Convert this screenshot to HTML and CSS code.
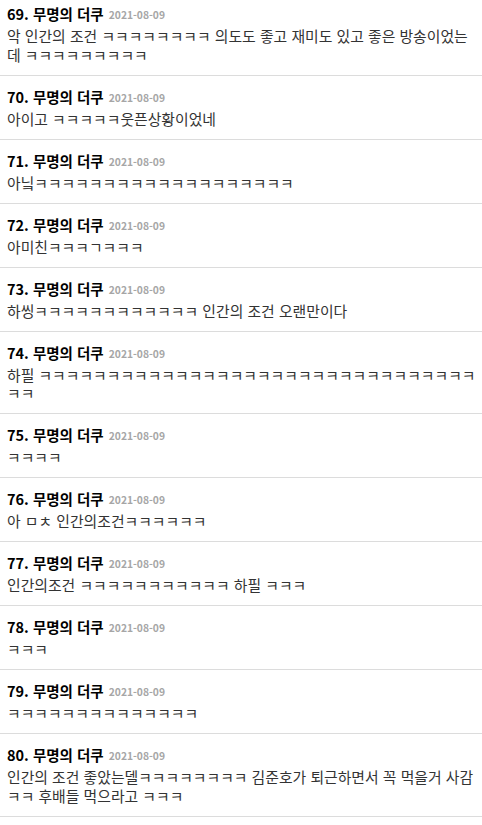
FILE: index.html
```html
<!DOCTYPE html>
<html lang="ko">
<head>
<meta charset="UTF-8" />
<meta name="viewport" content="width=device-width, initial-scale=1.0"/>
<title>댓글</title>
<link rel="stylesheet" href="styles.css">
</head>
<body>

<ul class="comment-list">
<li class="comment">
<div class="comment-head"><span class="num">69.</span> 무명의 더쿠 <span class="date">2021-08-09</span></div>
<p class="comment-text">악 인간의 조건 ㅋㅋㅋㅋㅋㅋㅋㅋ 의도도 좋고 재미도 있고 좋은 방송이었는데 ㅋㅋㅋㅋㅋㅋㅋㅋㅋ</p>
</li>
<li class="comment">
<div class="comment-head"><span class="num">70.</span> 무명의 더쿠 <span class="date">2021-08-09</span></div>
<p class="comment-text">아이고 ㅋㅋㅋㅋㅋ웃픈상황이었네</p>
</li>
<li class="comment">
<div class="comment-head"><span class="num">71.</span> 무명의 더쿠 <span class="date">2021-08-09</span></div>
<p class="comment-text">아닠ㅋㅋㅋㅋㅋㅋㅋㅋㅋㅋㅋㅋㅋㅋㅋㅋㅋㅋㅋ</p>
</li>
<li class="comment">
<div class="comment-head"><span class="num">72.</span> 무명의 더쿠 <span class="date">2021-08-09</span></div>
<p class="comment-text">아미친ㅋㅋㅋㄱㅋㅋㅋ</p>
</li>
<li class="comment">
<div class="comment-head"><span class="num">73.</span> 무명의 더쿠 <span class="date">2021-08-09</span></div>
<p class="comment-text">하씽ㅋㅋㅋㅋㅋㅋㅋㅋㅋㅋㅋㅋ 인간의 조건 오랜만이다</p>
</li>
<li class="comment">
<div class="comment-head"><span class="num">74.</span> 무명의 더쿠 <span class="date">2021-08-09</span></div>
<p class="comment-text">하필 ㅋㅋㅋㅋㅋㅋㅋㅋㅋㅋㅋㅋㅋㅋㅋㅋㅋㅋㅋㅋㅋㅋㅋㅋㅋㅋㅋㅋㅋㅋㅋㅋㅋㅋ</p>
</li>
<li class="comment">
<div class="comment-head"><span class="num">75.</span> 무명의 더쿠 <span class="date">2021-08-09</span></div>
<p class="comment-text">ㅋㅋㅋㅋ</p>
</li>
<li class="comment">
<div class="comment-head"><span class="num">76.</span> 무명의 더쿠 <span class="date">2021-08-09</span></div>
<p class="comment-text">아 ㅁㅊ 인간의조건ㅋㅋㅋㅋㅋㅋ</p>
</li>
<li class="comment">
<div class="comment-head"><span class="num">77.</span> 무명의 더쿠 <span class="date">2021-08-09</span></div>
<p class="comment-text">인간의조건 ㅋㅋㅋㅋㅋㅋㅋㅋㅋㅋㅋ 하필 ㅋㅋㅋ</p>
</li>
<li class="comment">
<div class="comment-head"><span class="num">78.</span> 무명의 더쿠 <span class="date">2021-08-09</span></div>
<p class="comment-text">ㅋㅋㅋ</p>
</li>
<li class="comment">
<div class="comment-head"><span class="num">79.</span> 무명의 더쿠 <span class="date">2021-08-09</span></div>
<p class="comment-text">ㅋㅋㅋㅋㅋㅋㅋㅋㅋㅋㅋㅋㅋㅋ</p>
</li>
<li class="comment">
<div class="comment-head"><span class="num">80.</span> 무명의 더쿠 <span class="date">2021-08-09</span></div>
<p class="comment-text">인간의 조건 좋았는델ㅋㅋㅋㅋㅋㅋㅋㅋ 김준호가 퇴근하면서 꼭 먹을거 사감ㅋㅋ 후배들 먹으라고 ㅋㅋㅋ</p>
</li>
</ul>

</body>
</html>
```

FILE: styles.css
```css
* {
box-sizing: border-box;
}
body {
margin: 0;
background-color: #fff;
color: #333;
font-family: "Noto Sans CJK KR", "Noto Sans", sans-serif;
overflow: hidden;
}

/* list is scrolled a bit, first comment starts above the top edge */
.comment-list {
list-style: none;
margin: -7px 0 0;
padding: 0;
}

.comment {
padding: 10px 4px 10.5px 7px;
border-bottom: 1px solid #dcdcdc;
}

.comment-head {
font-size: 14.5px;
font-weight: bold;
line-height: 22px;
color: #000;
}

.date {
font-size: 10.3px;
line-height: 12px;
color: #a6a6a6;
margin-left: 1px;
vertical-align: 1px;
}

.comment-text {
margin: 2px 0 0;
font-size: 14.85px;
line-height: 18.5px;
color: #333;
}
```
